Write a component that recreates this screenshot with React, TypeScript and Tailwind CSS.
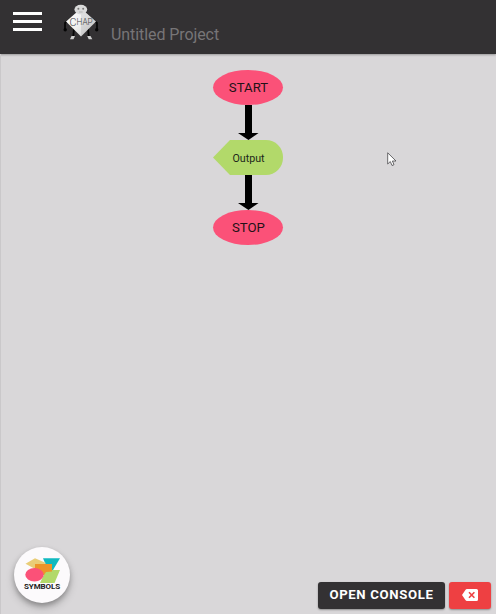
function Logo() {
  return (
    <svg className="ml-[21px] mt-[4px] h-[36px] w-[36px] shrink-0" viewBox="63 4 36 36">
      <defs>
        <linearGradient id="body" x1="0" y1="0" x2="1" y2="1">
          <stop offset="0" stopColor="#ffffff" />
          <stop offset="0.5" stopColor="#f0f0f0" />
          <stop offset="1" stopColor="#c8c8c8" />
        </linearGradient>
      </defs>
      <path d="M69 20 L65 23 V29 M93 20 L97 23 V29" fill="none" stroke="#050505" strokeWidth="1.7" />
      <circle cx="65.2" cy="29.8" r="1.7" fill="#050505" />
      <circle cx="96.7" cy="29.8" r="1.7" fill="#050505" />
      <path d="M74 28 L73.3 36 M88 28 L88.7 36" stroke="#050505" strokeWidth="1.8" />
      <path d="M71.5 36 H75 L73.5 39.2 H70 Z M87.2 36 H90.5 L92.3 39.2 H88.7 Z" fill="#cecece" />
      <path d="M81 8.5 L96 21.5 L81 36.5 L66 21.5 Z" fill="url(#body)" />
      <path d="M81 9 L96 21.5 L81 36.5 Z" fill="#8e8e8e" opacity="0.2" />
      <ellipse cx="80.8" cy="9.6" rx="6.4" ry="4.8" fill="#dadada" />
      <circle cx="78.4" cy="8.8" r="1" fill="#777" />
      <circle cx="83.2" cy="8.8" r="1" fill="#777" />
      <path d="M79 12 H82.6" stroke="#a0a0a0" strokeWidth="0.7" />
      <g fontFamily="Roboto, sans-serif" fill="#3f3f44">
        <text x="69.5" y="25.6" fontSize="10.5" fontWeight="300" textLength="7" lengthAdjust="spacingAndGlyphs">C</text>
        <text x="76.6" y="25.3" fontSize="8.5" fontWeight="300" textLength="16" lengthAdjust="spacingAndGlyphs">HAP</text>
      </g>
    </svg>
  );
}

function Arrow() {
  return (
    <svg className="block h-[35px] w-[22px]" viewBox="0 0 22 35">
      <path d="M8 0H15V28H21.5L11.5 35L1 28H8Z" fill="#000" />
    </svg>
  );
}

function Terminal({ label }: { label: string }) {
  return (
    <div className="flex h-[35px] w-[70px] items-center justify-center rounded-[50%] bg-[#fb5178] pl-px text-[13.2px] leading-[16px] text-[#231217]">
      {label}
    </div>
  );
}

function Symbols() {
  return (
    <button className="flex size-[56px] flex-col items-center rounded-full bg-[#fcfafc] pt-[11px] shadow-[0_3px_5px_rgba(0,0,0,.25),0_5px_10px_rgba(0,0,0,.16)]">
      <svg className="h-[26px] w-[36px] shrink-0" viewBox="24 558 36 26">
        <path d="M43 558.2H60L53 570H48Z" fill="#10b9c0" />
        <path d="M25.5 563.8L35 558.2L46 563L36 569.5Z" fill="#e9cd77" />
        <path d="M46 570H60L54.5 583H40Z" fill="#b2d96a" />
        <path d="M35 564H52V571.5L46 572L44 575H35Z" fill="#ed9429" />
        <ellipse cx="34.5" cy="574.7" rx="9.2" ry="6.7" fill="#fb5178" />
      </svg>
      <span className="text-[8px] font-bold leading-[6px] tracking-[-.1px] text-[#222]">SYMBOLS</span>
    </button>
  );
}

export default function App() {
  return (
    <div className="flex h-[614px] w-[496px] flex-col overflow-hidden bg-[#d9d7d9] font-['Roboto',sans-serif]">
      <header className="flex h-[54px] shrink-0 bg-[#333133] pl-[13px] shadow-[0_1px_2px_rgba(0,0,0,.3)]">
        <button className="mt-[12px] flex h-[19px] w-[29px] shrink-0 flex-col justify-between" aria-label="Menu">
          <span className="h-[3px] w-full bg-white" />
          <span className="h-[3px] w-full bg-white" />
          <span className="h-[3px] w-full bg-white" />
        </button>
        <Logo />
        <span className="ml-[12px] mt-[25px] text-[16px] leading-[19px] tracking-[-.08px] text-[#777577]">Untitled Project</span>
      </header>
      <main className="relative flex min-h-0 flex-1 flex-col items-center border-l border-[#cac8ca] pr-px pt-[16px]">
        <Terminal label="START" />
        <Arrow />
        <div className="flex h-[35px] w-[70px] items-center justify-center rounded-r-[17px] bg-[#b2d96a] pl-px pt-px text-[10.7px] leading-[13px] text-[#20271a] [clip-path:polygon(0_50%,17px_0,100%_0,100%_100%,17px_100%)]">
          Output
        </div>
        <Arrow />
        <Terminal label="STOP" />
        <svg className="absolute left-[386px] top-[98px] h-[15px] w-[10px]" viewBox="0 0 10 15">
          <path d="M.7 .8V12L3.3 9.5L5 13.5L7 12.7L5.4 9H9Z" fill="#fff" stroke="#48464a" strokeWidth=".8" />
        </svg>
      </main>
      <footer className="flex shrink-0 items-end border-l border-[#cac8ca] pb-[5px] pl-[13px] pr-[5px]">
        <div className="mb-[6px]"><Symbols /></div>
        <div className="ml-auto flex gap-[4px]">
          <button className="flex h-[27px] w-[127px] justify-center rounded-[3px] bg-[#333133] text-[13.2px] font-bold leading-[25px] tracking-[.65px] text-white shadow-[0_1px_2px_rgba(0,0,0,.35)]">
            OPEN CONSOLE
          </button>
          <button className="flex h-[27px] w-[42px] items-center justify-center rounded-[3px] bg-[#ee4042] pb-px shadow-[0_1px_2px_rgba(0,0,0,.35)]" aria-label="Clear">
            <svg className="h-[12px] w-[16px]" viewBox="0 0 16 12">
              <path d="M5 0H14.5Q16 0 16 1.5V10.5Q16 12 14.5 12H5Q4 12 3.4 11L0 6L3.4 1Q4 0 5 0Z" fill="#fff" />
              <path d="M7 3.2L12.4 8.8M12.4 3.2L7 8.8" stroke="#ee4042" strokeWidth="1.6" />
            </svg>
          </button>
        </div>
      </footer>
    </div>
  );
}
